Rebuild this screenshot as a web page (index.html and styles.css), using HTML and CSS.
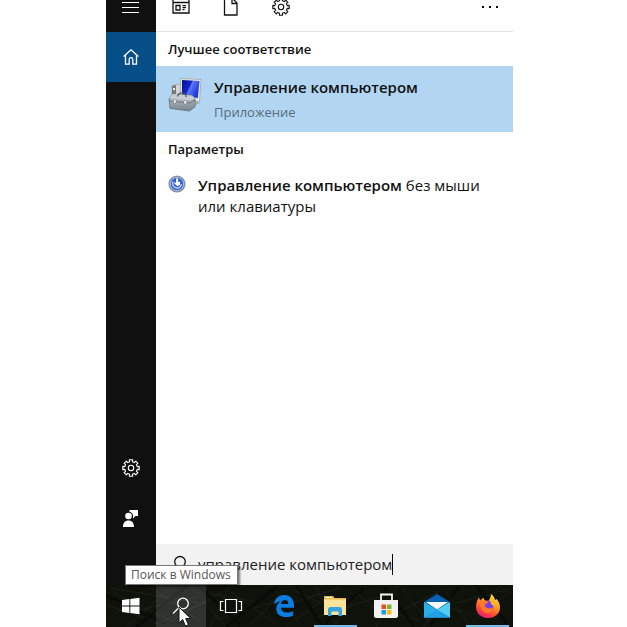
FILE: index.html
```html
<!DOCTYPE html>
<html lang="ru">
<head>
<meta charset="utf-8">
<title>Поиск в Windows</title>
<link rel="stylesheet" href="styles.css">
</head>
<body>
<div class="screen">
  <div class="shell">
    <div class="start">
      <nav class="rail" aria-label="Меню">
        <button class="rail-btn rail-menu" type="button" aria-label="Меню">
          <svg width="18" height="14" viewBox="0 0 18 14" stroke="#fff" stroke-width="1"><path d="M0 2.5h17M0 7.5h17M0 12.5h17"/></svg>
        </button>
        <button class="rail-btn rail-home" type="button" aria-label="Главная">
          <svg width="18" height="18" viewBox="0 0 18 18" fill="none" stroke="#fff" stroke-width="1.3"><path d="M1.600 8.600 9 1.800l7.400 6.800M3.500 7.200v9h3.700v-4.700a1.800 1.800 0 0 1 3.600 0v4.700h3.700v-9"/></svg>
        </button>
        <button class="rail-btn rail-push" type="button" aria-label="Настройки">
          <svg class="gear" width="18" height="18" viewBox="0 0 18 18"><use href="#gear"/></svg>
        </button>
        <button class="rail-btn" type="button" aria-label="Отзывы">
          <svg width="18" height="18" viewBox="0 0 18 18" fill="#fff"><circle cx="6.500" cy="7" r="3.300"/><path d="M1 18c0-4 2-6.500 5.500-6.500S12 14 12 18zM7.500 1H16v6h-2.500L11 9.500V6.600C10.600 4.300 9.300 3 7.500 2.700z"/></svg>
        </button>
      </nav>
      <main class="panel">
        <div class="toolbar">
          <button class="tool" type="button" aria-label="Приложения">
            <svg width="18" height="14" viewBox="0 0 18 14" fill="none" stroke="#111" stroke-width="1.300"><path d="M1-2h16v15H1zM1 2.500h16M4 5.500h4v4.500H4zM10.500 5.700H14M10.500 7.700H14M10.500 9.700h2"/></svg>
          </button>
          <button class="tool" type="button" aria-label="Документы">
            <svg width="18" height="14" viewBox="0 0 18 14" fill="none" stroke="#111" stroke-width="1.300"><path d="M2.500-2H10l5 5v12H2.500zM10-2v5.500h5"/></svg>
          </button>
          <button class="tool" type="button" aria-label="Параметры">
            <svg class="gear gear-dark" width="18" height="18" viewBox="0 0 18 18"><use href="#gear"/></svg>
          </button>
          <button class="tool tool-more" type="button" aria-label="Ещё">
            <svg width="16" height="2" viewBox="0 0 16 2" fill="#000"><path d="M0 0h2v2H0zM7 0h2v2H7zM14 0h2v2h-2z"/></svg>
          </button>
        </div>
        <h2 class="group">Лучшее соответствие</h2>
        <a class="best" href="#">
          <svg width="34" height="36" viewBox="0 0 34 36">
            <defs>
              <linearGradient id="scr" x1="0" x2="1" y1="0" y2=".5"><stop offset="0" stop-color="#05108e"/><stop offset=".5" stop-color="#1727cf"/><stop offset=".52" stop-color="#5f7cf4"/><stop offset="1" stop-color="#1d36dd"/></linearGradient>
              <linearGradient id="box" x2="0" y2="1"><stop offset="0" stop-color="#c4cbd0"/><stop offset="1" stop-color="#76828b"/></linearGradient>
            </defs>
            <path d="M4 8.500 10 7l5 2v12l-9 2-2-3z" fill="#d3d5d4" stroke="#8e9496" stroke-width=".6"/>
            <path d="M4 9l4-1v11l-4 1z" fill="#77797b"/><path d="M5 11h2v2H5z" fill="#eee"/>
            <path d="M12.500 1.500 33 2.500l-1.500 22.500-19-3z" fill="#e6e6e0" stroke="#8f9598" stroke-width=".6"/>
            <path d="M14 3l17.500 1-1.700 17L14 19z" fill="url(#scr)"/>
            <path d="M20 25l7-2 5 3-6 3z" fill="#a6adb0"/>
            <path d="M1 21l4-4 19 1.500 3 3V30l-5.500 4L2 31.500z" fill="url(#box)" stroke="#66737c" stroke-width=".8"/>
            <path d="M1 21l4-4 19 1.500 3 3-5.500 2z" fill="#c7cfd4"/><path d="M1 24l20.500 2 5.500-3" stroke="#56646f" stroke-width=".7" fill="none"/>
            <path d="M10 19.500V18l2-2h4l2 2v2" fill="none" stroke="#49525a" stroke-width="1.200"/>
            <path d="M5.500 22.500h2.500v3.500H5.500zM16 23.500h2.500V27H16z" fill="#f2f4f5" stroke="#78838a" stroke-width=".5"/>
          </svg>
          <span class="best-text">
            <span class="best-title">Управление компьютером</span>
            <span class="best-kind">Приложение</span>
          </span>
        </a>
        <h2 class="group">Параметры</h2>
        <a class="result" href="#">
          <svg width="18" height="18" viewBox="0 0 18 18">
            <circle cx="9" cy="9" r="7.800" fill="#2f62d0" stroke="#8f919c" stroke-width="1.600"/>
            <circle cx="9" cy="9" r="6.600" fill="none" stroke="#cad6f2" stroke-width=".8"/>
            <path d="M5 6.500A4.500 4.500 0 1 0 13.500 9" fill="none" stroke="#b8d0fb" stroke-width="1.500"/>
            <path d="M8 3.500h2.200v3.800l2-.8-.2 3.500-3 1-3.500-3.500 2.500.3z" fill="#fff"/>
          </svg>
          <span class="result-text"><b>Управление компьютером</b> без мыши или клавиатуры</span>
        </a>
        <label class="search">
          <svg width="18" height="18" viewBox="0 0 18 18" fill="none" stroke="#111" stroke-width="1.300"><circle cx="10" cy="5.800" r="5.300"/><path d="M6.300 9.700 1 15.500"/></svg>
          <span class="field">
            <input type="text" value="управление компьютером" size="22" aria-label="Поиск">
            <span class="caret"></span>
          </span>
        </label>
      </main>
    </div>
    <footer class="taskbar">
      <svg class="grass" preserveAspectRatio="none" viewBox="0 0 407 42" fill="none" aria-hidden="true">
        <path stroke="#2b3420" stroke-opacity=".4" d="M0 38 32 9 50 0M8 8l60 29M20 42 66 2M45 3l50 34M66 35l52-29M85 2l35 40M104 42l18-39M125 7l44 31M144 40l35-35M165 0l28 38M181 40l45-30M210 2l18 36M228 40l30-38M250 8l39 29M270 42l22-41M296 3l28 36M317 41l35-35M338 4l25 36M365 38l40-32"/>
        <path stroke="#343b2c" stroke-opacity=".3" d="M0 20l45 15M3 3l92 15M20 28l70-16M48 39l60-25M100 8l50 9M112 34l66-20M171 23l62-20M187 5l40 19M210 32l70-22M261 21l53 15M291 28l43-22M328 20l64 14M350 18l53-14"/>
        <path stroke="#050704" stroke-width="3" stroke-opacity=".6" d="M0 10l60 29M30 42 82 0M94 2l40 38M120 42l50-40M190 0l25 40M219 39l39-36M278 2l30 39M324 40l29-38M370 0l32 40"/>
      </svg>
      <button class="task" type="button" aria-label="Пуск">
        <svg width="18" height="18" viewBox="0 0 18 18" fill="#fff"><path d="M0 3l7.400-1v6.500H0zM8.300 1.900 17.500.7v7.800H8.300zM0 9.400h7.400v6.500L0 14.900zM8.300 9.400h9.200v7.800L8.300 16z"/></svg>
      </button>
      <button class="task task-active" type="button" aria-label="Поиск" aria-describedby="tip">
        <svg width="18" height="18" viewBox="0 0 18 18" fill="none" stroke="#fff" stroke-width="1.300"><circle cx="11" cy="6.500" r="5.300"/><path d="M7.300 10.300 1 16.500"/></svg>
      </button>
      <button class="task" type="button" aria-label="Представление задач">
        <svg width="22" height="18" viewBox="0 0 22 18" fill="none" stroke="#fff" stroke-width="1.200"><path d="M5.500 2.500h11v13h-11zM3.500 4.500h-3v9h3M18.500 4.500h3v9h-3"/></svg>
      </button>
      <div class="apps">
        <button class="task" type="button" aria-label="Edge">
          <svg width="22" height="24" viewBox="0 0 22 24"><path fill="#0b7de0" d="M1 10.300C1.800 4.500 5.600 1 11.200 1 17.500 1 21 5.500 21 11.300v2.500H8c.2 3.300 2.900 4.800 6.300 4.800 2.200 0 4.100-.6 5.800-1.600v4.500c-2 1-4.300 1.600-6.900 1.600-6 0-9.900-3.200-9.900-8.400 0-3.300 1.700-5.900 4.700-7.300C4.900 7.800 2.700 8.500 1 10.300zM8.100 9.900h7.200c0-2.600-1.200-4-3.500-4-2 0-3.400 1.500-3.700 4z"/></svg>
        </button>
        <button class="task task-open" type="button" aria-label="Проводник">
          <svg width="24" height="22" viewBox="0 0 24 22"><path d="M1 1h9l1.500 2H23v17H1z" fill="#e9b94d"/><path d="M3 2h6v1H3z" fill="#fff"/><path d="M1 4.500h22V20H1z" fill="#fce39a"/><path d="M5 21v-6.500c0-1.500 1-2.500 2.500-2.500h9c1.500 0 2.500 1 2.500 2.500V21h-3.500v-4.500h-7V21z" fill="#34a3df"/></svg>
        </button>
        <button class="task" type="button" aria-label="Магазин">
          <svg width="24" height="26" viewBox="0 0 24 26"><path d="M7 8V1.500h11V8" fill="none" stroke="#f5f5f5" stroke-width="1.800"/><path d="M0 7h24v16.500L22.500 25h-21L0 23.500z" fill="#f2f2f2"/><path fill="#e84a22" d="M7.500 11.500H12V16H7.500z"/><path fill="#80b81d" d="M13 11.500h4.500V16H13z"/><path fill="#1b9de2" d="M7.500 17H12v4.500H7.500z"/><path fill="#fbb912" d="M13 17h4.500v4.500H13z"/></svg>
        </button>
        <button class="task" type="button" aria-label="Почта">
          <svg width="26" height="24" viewBox="0 0 26 24"><path d="M0 8 13 0l13 8v15.500H0z" fill="#0860b4"/><path d="M2 8h22L13 15.500z" fill="#f6fafd"/><path d="M0 8l26 15.500H0z" fill="#2badea"/><path d="M26 8v15.500L13 15.700z" fill="#53cdf4"/><path d="M0 23.500l13-7.800 13 7.800z" fill="#229fe4"/></svg>
        </button>
        <button class="task task-open" type="button" aria-label="Firefox">
          <svg width="24" height="26" viewBox="0 0 24 26">
            <defs><linearGradient id="fox" x1=".8" y1="0" x2=".3" y2="1"><stop offset="0" stop-color="#ffe84b"/><stop offset=".4" stop-color="#ffa01f"/><stop offset=".75" stop-color="#ff4537"/><stop offset="1" stop-color="#e3157b"/></linearGradient></defs>
            <path d="M15 1c2.800 1.800 3.600 4 4 6l1.500-1c2 2 3.500 5.300 3.500 8.500C24 20.700 18.800 25 12.200 25 5.400 25 0 20.400 0 13.900 0 10 1.200 7.200 3 4.500c.2 1.200.6 2.100 1.300 2.900C5.500 6 7 4.800 8 5c-.4 1 .1 2 1.200 2.700h3.300C14 6 14.900 3.500 15 1z" fill="url(#fox)"/>
            <circle cx="12.300" cy="13" r="5.500" fill="#7a3fe0"/><path d="M4.500 8c3-1.400 6-.7 8 1.300-1 1.300-3 1.700-4 2.700 1 3.600 5.200 4.700 8.500 2.200-.6 4.300-3.800 6.500-7.500 5.600C5.500 18.400 3 13 4.500 8z" fill="#ff7a26"/><path d="M14 7c4 .5 6 4 4.500 8-.6-2-2-3-3.500-4z" fill="#ffb52b"/>
          </svg>
        </button>
      </div>
      <span class="tip" id="tip" role="tooltip">Поиск в Windows</span>
      <svg class="pointer" width="14" height="21" viewBox="0 0 14 21" aria-hidden="true"><path d="M1 1v16l3.700-3.500L7.400 20l3-1.300L7.700 12.500h5z" fill="#fff" stroke="#111"/></svg>
    </footer>
  </div>
</div>
<svg class="defs" width="0" height="0" aria-hidden="true">
  <defs>
    <g id="gear" fill="none" stroke-width="1.100" stroke-linejoin="round">
      <circle cx="9" cy="9" r="2.700"/>
      <path d="M7.600 2.800 7.400.8h3.200l-.2 2 2 .8 1.300-1.500 2.200 2.200-1.500 1.300.8 2 2-.2v3.200l-2-.2-.8 2 1.500 1.300-2.200 2.200-1.300-1.500-2 .8.200 2H7.400l.2-2-2-.8-1.300 1.500-2.200-2.200 1.500-1.300-.8-2-2 .2V7.400l2 .2.800-2-1.500-1.300 2.200-2.200 1.300 1.500z"/>
    </g>
  </defs>
</svg>
</body>
</html>
```
FILE: styles.css
```css
* { box-sizing: border-box; }

body {
  margin: 0;
  background: #fff;
  color: #111;
  font-family: "Open Sans", "Noto Sans", sans-serif;
  font-size: 15px;
  line-height: 21px;
}

button {
  padding: 0;
  border: 0;
  background: none;
  font: inherit;
}

a { color: inherit; text-decoration: none; }
svg { display: block; flex: none; overflow: visible; }
.defs { position: absolute; }

.screen {
  display: grid;
  grid-template-columns: 106fr 407fr 114fr;
  min-height: 100vh;
}

.shell {
  grid-column: 2;
  display: flex;
  flex-direction: column;
}

.start { flex: 1; display: flex; }

.rail {
  flex: none;
  width: 50px;
  padding-bottom: 42px;
  display: flex;
  flex-direction: column;
  background: #101010;
}

.rail-btn {
  height: 50px;
  display: flex;
  align-items: center;
  justify-content: center;
}

.rail-menu { height: 32px; padding-bottom: 18px; }
.rail-home { background: #064e87; }
.rail-push { margin-top: auto; }

.gear { stroke: #fff; }
.gear-dark { stroke: #111; }

.panel {
  flex: 1;
  min-width: 0;
  display: flex;
  flex-direction: column;
}

.toolbar {
  height: 32px;
  display: flex;
  border-bottom: 1px solid #e2e2e2;
}

.tool {
  width: 50px;
  height: 14px;
  display: flex;
  align-items: center;
  justify-content: center;
}

.tool-more { margin-left: auto; width: 46px; }

.group {
  margin: 0;
  padding: 0 12px;
  font-size: 13px;
  font-weight: 600;
  line-height: 34px;
}

.best {
  height: 66px;
  padding: 2px 12px 0;
  display: flex;
  align-items: center;
  gap: 12px;
  background: #b2d6f2;
}

.best svg { margin-bottom: 10px; }
.best-text { display: flex; flex-direction: column; gap: 4px; }
.best-title { font-weight: 600; }
.best-kind { font-size: 13px; color: #596b7a; }

.result {
  padding: 9px 24px 9px 12px;
  display: flex;
  gap: 12px;
}

.result b { font-weight: 600; }

.search {
  margin-top: auto;
  height: 41px;
  padding: 0 14px;
  display: flex;
  align-items: center;
  gap: 10px;
  background: #f2f2f2;
}

.field { display: flex; align-items: center; }

.search input {
  field-sizing: content;
  padding: 0;
  border: 0;
  outline: 0;
  background: none;
  color: #222;
  font: inherit;
}

.caret { width: 1px; height: 21px; background: #000; }

.taskbar {
  position: relative;
  height: 42px;
  display: flex;
  background: #0f120b;
}

.grass {
  position: absolute;
  inset: 0;
  width: 100%;
  height: 100%;
  overflow: hidden;
}

.task {
  position: relative;
  width: 50px;
  display: flex;
  align-items: center;
  justify-content: center;
}

.task-active { background: rgba(255, 255, 255, 0.14); }

.apps { flex: 1; display: flex; padding-left: 3px; }
.apps .task { flex: 1; }

.task-open::after {
  content: "";
  position: absolute;
  left: 4px;
  right: 4px;
  bottom: 0;
  height: 2px;
  background: #76b9ed;
}

.tip {
  position: absolute;
  left: 19px;
  bottom: 42px;
  padding: 0 6px 0 5px;
  border: 1px solid #777;
  background: #fff;
  box-shadow: 2px 2px 2px rgba(0, 0, 0, 0.5);
  color: #575757;
  font-size: 12px;
  line-height: 18px;
  white-space: nowrap;
}

.pointer { position: absolute; left: 72px; top: 21px; }
```
